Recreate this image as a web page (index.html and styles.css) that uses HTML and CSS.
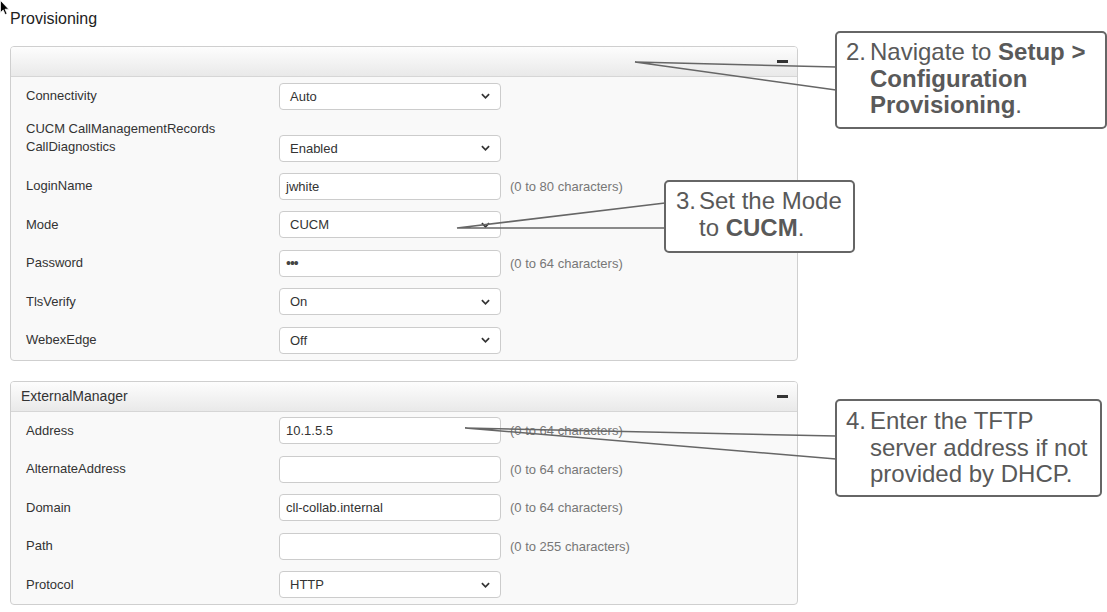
FILE: index.html
```html
<!DOCTYPE html>
<html lang="en">
<head>
<meta charset="utf-8">
<title>Provisioning</title>
<link rel="stylesheet" href="styles.css">
</head>
<body>
<div class="page">
  <h1 class="title">Provisioning</h1>

  <section class="panel">
    <div class="panel-head"><span class="panel-title"></span><span class="collapse"></span></div>
    <div class="panel-body">
      <div class="row"><span class="label">Connectivity</span><div class="control select"><span>Auto</span><svg class="chev" viewBox="0 0 10 6"><path d="M1 1 L5 5 L9 1"/></svg></div></div>
      <div class="row tall"><span class="label">CUCM CallManagementRecords<br>CallDiagnostics</span><div class="control select"><span>Enabled</span><svg class="chev" viewBox="0 0 10 6"><path d="M1 1 L5 5 L9 1"/></svg></div></div>
      <div class="row"><span class="label">LoginName</span><div class="control input">jwhite</div><span class="hint">(0 to 80 characters)</span></div>
      <div class="row"><span class="label">Mode</span><div class="control select"><span>CUCM</span><svg class="chev" viewBox="0 0 10 6"><path d="M1 1 L5 5 L9 1"/></svg></div></div>
      <div class="row"><span class="label">Password</span><div class="control input dots">•••</div><span class="hint">(0 to 64 characters)</span></div>
      <div class="row"><span class="label">TlsVerify</span><div class="control select"><span>On</span><svg class="chev" viewBox="0 0 10 6"><path d="M1 1 L5 5 L9 1"/></svg></div></div>
      <div class="row"><span class="label">WebexEdge</span><div class="control select"><span>Off</span><svg class="chev" viewBox="0 0 10 6"><path d="M1 1 L5 5 L9 1"/></svg></div></div>
    </div>
  </section>

  <section class="panel">
    <div class="panel-head"><span class="panel-title">ExternalManager</span><span class="collapse"></span></div>
    <div class="panel-body">
      <div class="row"><span class="label">Address</span><div class="control input">10.1.5.5</div><span class="hint">(0 to 64 characters)</span></div>
      <div class="row"><span class="label">AlternateAddress</span><div class="control input"></div><span class="hint">(0 to 64 characters)</span></div>
      <div class="row"><span class="label">Domain</span><div class="control input">cll-collab.internal</div><span class="hint">(0 to 64 characters)</span></div>
      <div class="row"><span class="label">Path</span><div class="control input"></div><span class="hint">(0 to 255 characters)</span></div>
      <div class="row"><span class="label">Protocol</span><div class="control select"><span>HTTP</span><svg class="chev" viewBox="0 0 10 6"><path d="M1 1 L5 5 L9 1"/></svg></div></div>
    </div>
  </section>
</div>

<svg class="cursor" viewBox="0 0 10 16"><path d="M0.5 0.5 L0.5 12.5 L3.2 9.9 L5.2 14.6 L7 13.8 L5 9.2 L8.7 9.2 Z"/></svg>

<svg class="leaders" width="1107" height="612" viewBox="0 0 1107 612">
  <polyline points="836,67 635,62 836,90"/>
  <polyline points="665,203 457,228 665,228"/>
  <polyline points="836,436 465,428 836,459"/>
</svg>

<div class="callout c1">
  <div class="step"><span class="num">2.</span><span class="txt">Navigate to <b>Setup &gt;</b><br><b>Configuration</b><br><b>Provisioning</b>.</span></div>
</div>
<div class="callout c2">
  <div class="step"><span class="num">3.</span><span class="txt">Set the Mode<br>to <b>CUCM</b>.</span></div>
</div>
<div class="callout c3">
  <div class="step"><span class="num">4.</span><span class="txt">Enter the TFTP<br>server address if not<br>provided by DHCP.</span></div>
</div>
</body>
</html>
```
FILE: styles.css
```css
html, body {
  margin: 0;
  padding: 0;
  background: #ffffff;
}
body {
  position: relative;
  width: 1107px;
  height: 612px;
  overflow: hidden;
  font-family: "Liberation Sans", Arial, sans-serif;
  color: #333;
}
.page {
  padding: 9px 0 0 10px;
}
.title {
  margin: 0;
  font-size: 16px;
  font-weight: normal;
  line-height: 20px;
  height: 20px;
  color: #222;
}
.panel {
  width: 788px;
  box-sizing: border-box;
  border: 1px solid #cfcfcf;
  border-radius: 4px;
  background: #f9f9f9;
  margin-top: 17px;
  overflow: hidden;
}
.panel + .panel {
  margin-top: 20px;
}
.panel-head {
  height: 29px;
  border-bottom: 1px solid #d6d6d6;
  background: linear-gradient(#fdfdfd, #e9e9e9);
  display: flex;
  align-items: center;
  justify-content: space-between;
  padding: 0 9px 0 10px;
}
.panel-title {
  font-size: 14px;
  color: #333;
}
.collapse {
  width: 11px;
  height: 3px;
  background: #333;
}
.panel-body {
  padding: 0 0 0 15px;
}
.row {
  height: 38.5px;
  display: flex;
  align-items: center;
}
.row.tall {
  height: 51.5px;
  align-items: flex-start;
}
.label {
  width: 253px;
  flex: none;
  font-size: 13px;
  line-height: 18px;
  color: #333;
}
.row.tall .label {
  padding-top: 4px;
}
.row.tall .control {
  margin-top: 19px;
}
.control {
  width: 222px;
  height: 27px;
  flex: none;
  box-sizing: border-box;
  background: #fff;
  border: 1px solid #cccccc;
  border-radius: 4px;
  font-size: 13px;
  color: #333;
  display: flex;
  align-items: center;
}
.control.input {
  padding-left: 6px;
}
.control.dots {
  font-size: 14px;
  letter-spacing: -1px;
  color: #444;
}
.control.select {
  padding: 0 10px 0 10px;
  justify-content: space-between;
}
.chev {
  width: 9px;
  height: 6px;
  fill: none;
  stroke: #333;
  stroke-width: 1.9;
}
.hint {
  margin-left: 9px;
  font-size: 13px;
  color: #777;
}
.cursor {
  position: absolute;
  left: 0;
  top: 0;
  width: 10px;
  height: 16px;
  fill: #000;
  stroke: #fff;
  stroke-width: 0.7;
}
.leaders {
  position: absolute;
  left: 0;
  top: 0;
  pointer-events: none;
}
.leaders polyline {
  fill: none;
  stroke: #666;
  stroke-width: 1.5;
}
.callout {
  position: absolute;
  box-sizing: border-box;
  background: #fff;
  border: 2px solid #666;
  border-radius: 5px;
  color: #595959;
  font-size: 24px;
  line-height: 26.5px;
  padding: 6px 0 0 9px;
}
.callout b {
  font-weight: bold;
}
.c1 {
  left: 835px;
  top: 31px;
  width: 272px;
  height: 98px;
}
.c2 {
  left: 664px;
  top: 180px;
  width: 191px;
  height: 73px;
  padding-left: 10px;
  padding-top: 6px;
}
.c3 {
  left: 835px;
  top: 399px;
  width: 267px;
  height: 98px;
  padding-top: 7px;
}
.step {
  display: flex;
}
.num {
  width: 24px;
  flex: none;
}
.c2 .num {
  width: 23px;
}
.txt {
  white-space: nowrap;
}
```
